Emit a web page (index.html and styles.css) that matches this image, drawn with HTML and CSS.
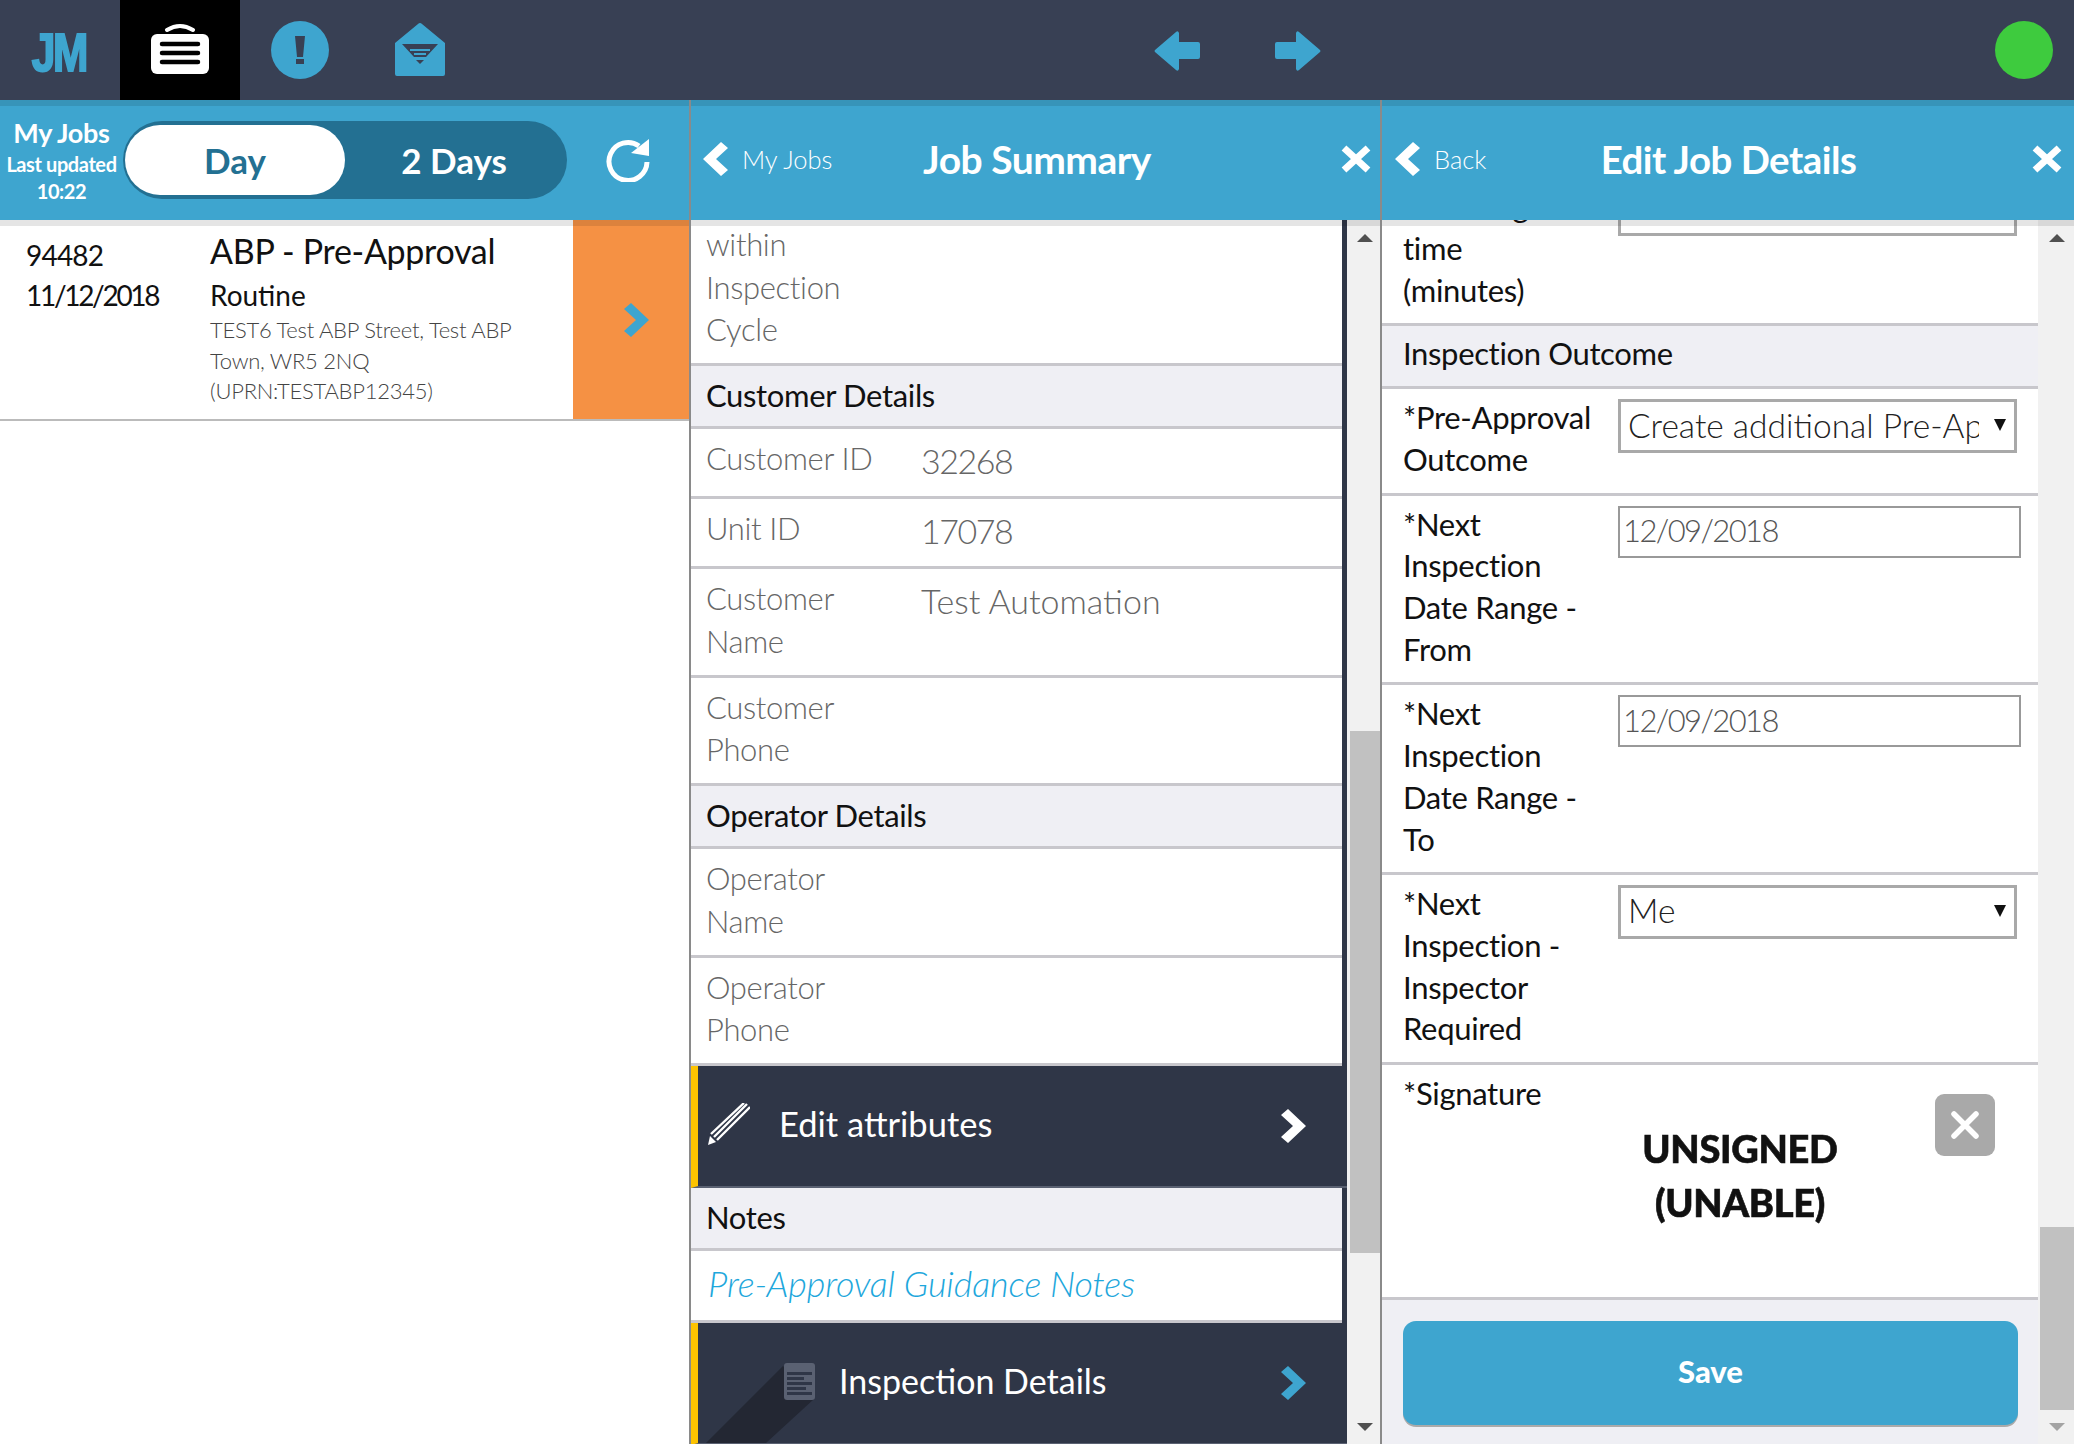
FILE: index.html
```html
<!DOCTYPE html>
<html lang="en">
<head>
    <meta charset="UTF-8">
    <title>My Jobs</title>
    <link rel="stylesheet" href="styles.css">
</head>
<body>

<svg class="defs" width="0" height="0">
    <symbol id="chev" viewBox="0 0 25 34"><path d="M0 6 L7 0 L25 17 L7 34 L0 28 L12 17 Z"/></symbol>
    <symbol id="chev-left" viewBox="0 0 25 34"><path d="M25 6 L18 0 L0 17 L18 34 L25 28 L13 17 Z"/></symbol>
    <symbol id="close" viewBox="0 0 30 28"><path d="M3 3 L27 25 M27 3 L3 25" stroke="#fff" stroke-width="7" fill="none"/></symbol>
</svg>

<header class="topbar">
    <nav class="nav">
        <a class="nav-item"><span class="logo">JM</span></a>
        <a class="nav-item active">
            <svg width="60" height="54" viewBox="0 0 60 54">
                <path d="M17 7 Q30 -1 43 7" stroke="#fff" stroke-width="4" stroke-linecap="round" fill="none"/>
                <rect x="1" y="11" width="58" height="40" rx="6" fill="#fff"/>
                <path d="M12 21 H48 M12 30 H48 M12 39 H48" stroke="#000" stroke-width="4.5" stroke-linecap="round"/>
            </svg>
        </a>
        <a class="nav-item">
            <svg width="58" height="58" viewBox="0 0 58 58">
                <circle cx="29" cy="29" r="29" fill="#3ea5cf"/>
                <path d="M24 15 H34 L32 36 H26 Z M25 38 H33 V43 H25 Z" fill="#384054"/>
            </svg>
        </a>
        <a class="nav-item">
            <svg width="52" height="54" viewBox="0 0 52 54">
                <path d="M24 1 Q26 -1 28 1 L51 20 V51 Q51 53 49 53 H3 Q1 53 1 51 V20 Z" fill="#3ea5cf"/>
                <path d="M8 21 H44 L32 34 H20 Z M22 37 H30 L26 41 Z" fill="#384054"/>
                <path d="M16 27 H36 M20 31 H32" stroke="#3ea5cf" stroke-width="2"/>
            </svg>
        </a>
    </nav>
    <div class="history">
        <svg width="46" height="42" viewBox="0 0 46 42"><path d="M22 2 Q24 0 25 3 V12 H44 Q46 12 46 14 V27 Q46 29 44 29 H25 V39 Q24 42 22 40 L1 22 Q0 21 1 20 Z" fill="#3ea5cf"/></svg>
        <svg width="46" height="42" viewBox="0 0 46 42"><path d="M24 2 Q22 0 21 3 V12 H2 Q0 12 0 14 V27 Q0 29 2 29 H21 V39 Q22 42 24 40 L45 22 Q46 21 45 20 Z" fill="#3ea5cf"/></svg>
    </div>
    <span class="status-dot"></span>
</header>

<main class="panels">

    <section class="panel">
        <div class="panel-head jobs-head">
            <div class="updated">
                <div class="updated-title">My Jobs</div>
                <div>Last updated</div>
                <div>10:22</div>
            </div>
            <div class="toggle">
                <span class="toggle-on">Day</span>
                <span class="toggle-off">2 Days</span>
            </div>
            <svg class="refresh" width="44" height="44" viewBox="0 0 44 44">
                <path d="M33 8 A19 19 0 1 0 41 24" stroke="#fff" stroke-width="5" fill="none"/>
                <path d="M25 15 L43 18 L43 1 Z" fill="#fff"/>
            </svg>
        </div>
        <div class="job">
            <div class="job-ref">
                <div class="job-id">94482</div>
                <div class="job-date">11/12/2018</div>
            </div>
            <div class="job-info">
                <div class="job-title">ABP - Pre-Approval</div>
                <div class="job-type">Routine</div>
                <div class="job-addr">TEST6 Test ABP Street, Test ABP Town, WR5 2NQ (UPRN:TESTABP12345)</div>
            </div>
            <div class="job-go"><svg class="chev blue"><use href="#chev"/></svg></div>
        </div>
    </section>

    <section class="panel">
        <div class="panel-head">
            <a class="back"><svg class="chev"><use href="#chev-left"/></svg>My Jobs</a>
            <h2>Job Summary</h2>
            <svg class="close"><use href="#close"/></svg>
        </div>
        <div class="panel-body">
            <div class="list dark">
                <div class="row first"><div class="label muted">within<br>Inspection<br>Cycle</div></div>
                <div class="section">Customer Details</div>
                <div class="row"><div class="label muted">Customer ID</div><div class="value num">32268</div></div>
                <div class="row"><div class="label muted">Unit ID</div><div class="value num">17078</div></div>
                <div class="row"><div class="label muted">Customer<br>Name</div><div class="value">Test Automation</div></div>
                <div class="row"><div class="label muted">Customer<br>Phone</div></div>
                <div class="section">Operator Details</div>
                <div class="row"><div class="label muted">Operator<br>Name</div></div>
                <div class="row"><div class="label muted">Operator<br>Phone</div></div>
                <div class="action">
                    <svg class="action-icon" width="42" height="42" viewBox="0 0 42 42">
                        <path d="M39 1 L6 34 M42 4 L9 37 M36 0 L3 31" stroke="#fff" stroke-width="2.4" fill="none"/>
                        <path d="M2 33 L8 39 L0 42 Z" fill="#fff"/>
                    </svg>
                    <span class="action-text">Edit attributes</span>
                    <svg class="chev"><use href="#chev"/></svg>
                </div>
                <div class="section">Notes</div>
                <div class="row link-row"><a class="note-link">Pre-Approval Guidance Notes</a></div>
                <div class="action details">
                    <svg class="long-shadow" width="110" height="82" viewBox="0 0 110 82"><path d="M77 5 L108 38 L60 82 L0 82 Z" fill="#232733"/></svg>
                    <svg class="doc-icon" width="31" height="37" viewBox="0 0 31 37">
                        <rect width="31" height="37" rx="3" fill="#5a6172"/>
                        <path d="M3 10.5 H28 M3 15.5 H20 M3 20.5 H28 M3 25.5 H22 M3 30.5 H28" stroke="#2f3647" stroke-width="3"/>
                    </svg>
                    <span class="action-text">Inspection Details</span>
                    <svg class="chev blue"><use href="#chev"/></svg>
                </div>
            </div>
            <div class="scrollbar">
                <span class="arrow-up"></span>
                <span class="thumb thumb-summary"></span>
                <span class="arrow-down"></span>
            </div>
        </div>
    </section>

    <section class="panel last">
        <div class="panel-head">
            <a class="back"><svg class="chev"><use href="#chev-left"/></svg>Back</a>
            <h2>Edit Job Details</h2>
            <svg class="close"><use href="#close"/></svg>
        </div>
        <div class="panel-body">
            <div class="form-wrap">
                <div class="list edit">
                    <div class="row">
                        <div class="label">Travelling<br>time<br>(minutes)</div>
                        <div class="select clipped"></div>
                    </div>
                    <div class="section">Inspection Outcome</div>
                    <div class="row">
                        <div class="label">*Pre-Approval<br>Outcome</div>
                        <div class="select"><span class="select-text">Create additional Pre-Approval</span><span class="select-arrow"></span></div>
                    </div>
                    <div class="row">
                        <div class="label">*Next<br>Inspection<br>Date Range -<br>From</div>
                        <input class="date" type="text" value="12/09/2018">
                    </div>
                    <div class="row">
                        <div class="label">*Next<br>Inspection<br>Date Range -<br>To</div>
                        <input class="date" type="text" value="12/09/2018">
                    </div>
                    <div class="row">
                        <div class="label">*Next<br>Inspection -<br>Inspector<br>Required</div>
                        <div class="select"><span class="select-text">Me</span><span class="select-arrow"></span></div>
                    </div>
                    <div class="row signature">
                        <div class="label">*Signature</div>
                        <div class="sign-box">
                            <div class="unsigned">UNSIGNED<br>(UNABLE)</div>
                            <button class="sign-clear"><svg width="30" height="28" viewBox="0 0 30 28"><path d="M4 3 L26 25 M26 3 L4 25" stroke="#fff" stroke-width="5.5" stroke-linecap="round"/></svg></button>
                        </div>
                    </div>
                </div>
                <div class="form-foot"><button class="save">Save</button></div>
            </div>
            <div class="scrollbar wide">
                <span class="arrow-up"></span>
                <span class="thumb thumb-edit"></span>
                <span class="arrow-down light"></span>
            </div>
        </div>
    </section>

</main>

</body>
</html>
```

FILE: styles.css
```css
* {
    margin: 0;
    padding: 0;
    box-sizing: border-box;
}
body {
    font-family: Lato, "Noto Sans", sans-serif;
    background-color: #fff;
    color: #111;
    width: 2074px;
    height: 1444px;
    overflow: hidden;
}
.defs {
    display: block;
    height: 0;
}
.topbar {
    height: 100px;
    background-color: #384054;
    display: flex;
    align-items: center;
}
.nav {
    display: flex;
    width: 480px;
}
.nav-item {
    width: 120px;
    height: 100px;
    display: flex;
    justify-content: center;
    align-items: center;
}
.nav-item.active {
    background-color: #000;
}
.logo {
    font-family: "Liberation Sans", sans-serif;
    font-size: 53px;
    font-weight: 700;
    letter-spacing: -3px;
    color: #3ea5cf;
    -webkit-text-stroke: 2px #3ea5cf;
    transform: scaleX(0.8);
    margin-left: -2px;
    margin-top: 4px;
}
.history {
    display: flex;
    gap: 75px;
    margin-left: 674px;
    margin-top: 2px;
}
.status-dot {
    width: 58px;
    height: 58px;
    border-radius: 50%;
    background-color: #3ecb3e;
    margin-left: auto;
    margin-right: 21px;
}

.panels {
    display: grid;
    grid-template-columns: 691px 691px 692px;
    height: 1344px;
}
.panel {
    border-right: 2px solid #8a8a8a;
    display: flex;
    flex-direction: column;
    min-width: 0;
    overflow: hidden;
}
.panel.last {
    border-right: none;
}
.panel-head {
    height: 120px;
    flex-shrink: 0;
    background-color: #3ea5cf;
    color: #fff;
    display: grid;
    grid-template-columns: 1fr auto 1fr;
    align-items: center;
    padding: 0 9px 2px 12px;
    position: relative;
    z-index: 2;
    box-shadow: 0 6px 0 rgba(0, 0, 0, 0.1), inset 0 6px 0 rgba(0, 0, 0, 0.1);
}
.last .panel-head {
    padding: 0 12px 2px 13px;
}
.panel-head h2 {
    font-size: 39px;
    font-weight: 700;
    letter-spacing: -0.5px;
}
.last .panel-head h2 {
    font-size: 38.4px;
}
.back {
    display: flex;
    align-items: center;
    gap: 14px;
    font-size: 25.5px;
    font-weight: 300;
}
.close {
    width: 30px;
    height: 28px;
    justify-self: end;
}
.chev {
    width: 25px;
    height: 34px;
    fill: #fff;
    flex-shrink: 0;
}
.chev.blue {
    fill: #3ea5cf;
}

.jobs-head {
    display: flex;
    padding: 0;
}
.updated {
    width: 123px;
    text-align: center;
    font-size: 20px;
    font-weight: 700;
    line-height: 27px;
    letter-spacing: -0.4px;
}
.updated-title {
    font-size: 27px;
    line-height: 36px;
    letter-spacing: -0.3px;
}
.toggle {
    width: 444px;
    height: 78px;
    border-radius: 39px;
    background-color: #237092;
    display: flex;
    align-items: center;
    padding: 0 4px 0 2px;
    font-size: 35px;
    font-weight: 700;
}
.toggle-on {
    width: 220px;
    height: 70px;
    line-height: 70px;
    border-radius: 35px;
    background-color: #fff;
    color: #237092;
    text-align: center;
}
.toggle-off {
    flex: 1;
    text-align: center;
}
.refresh {
    margin-left: 39px;
}

.job {
    display: flex;
    height: 201px;
    border-bottom: 2px solid #bbb;
}
.job-ref {
    width: 210px;
    padding: 15px 0 0 26px;
    font-size: 28px;
    line-height: 40px;
}
.job-id {
    letter-spacing: -0.8px;
}
.job-date {
    letter-spacing: -2.3px;
}
.job-info {
    width: 363px;
    padding-top: 11px;
}
.job-title {
    font-size: 34px;
    line-height: 40px;
    letter-spacing: -0.3px;
}
.job-type {
    font-size: 28px;
    line-height: 44px;
    margin-top: 2px;
    margin-bottom: -2px;
}
.job-addr {
    font-size: 22px;
    font-weight: 300;
    line-height: 30.5px;
    letter-spacing: -0.25px;
    color: #444;
    padding-right: 30px;
}
.job-go {
    width: 116px;
    background-color: #f59144;
    display: flex;
    justify-content: center;
    align-items: center;
    padding-left: 10px;
}

.panel-body {
    flex: 1;
    display: flex;
    min-height: 0;
}
.list {
    flex: 1;
    min-width: 0;
    overflow: hidden;
}
.list.dark {
    background-color: #2f3647;
}
.row {
    background-color: #fff;
    border-bottom: 3px solid #c8c7cc;
    padding: 8px 0 12px 15px;
    display: grid;
    grid-template-columns: 215px 1fr;
    font-size: 31px;
    line-height: 42.6px;
    letter-spacing: -0.15px;
    margin-right: 5px;
}
.row.first {
    margin-top: -5px;
}
.muted {
    font-weight: 300;
    color: #666;
    letter-spacing: -0.35px;
}
.value {
    font-size: 34px;
    font-weight: 300;
    line-height: 47px;
    letter-spacing: 0;
    color: #666;
}
.value.num {
    letter-spacing: -1.5px;
}
.section {
    background-color: #efeff4;
    border-bottom: 3px solid #c8c7cc;
    padding: 9px 0 10px 15px;
    font-size: 31px;
    line-height: 41.6px;
    letter-spacing: -0.35px;
    margin-right: 5px;
}
.link-row {
    display: block;
    padding: 10px 0 13px 17px;
    line-height: 44px;
}
.note-link {
    font-size: 36px;
    font-weight: 300;
    font-style: italic;
    color: #1ea7dc;
}

.action {
    height: 122px;
    background-color: #2f3647;
    border-left: 7px solid #fdc300;
    border-bottom: 2px solid #5a6172;
    color: #fff;
    display: flex;
    align-items: center;
    padding: 0 41px 0 10px;
    position: relative;
    overflow: hidden;
}
.action-text {
    flex: 1;
    font-size: 34.5px;
    margin: -4px 0 0 29px;
}
.action-icon {
    margin-top: -4px;
}
.details {
    padding-left: 86px;
}
.details .action-text {
    font-size: 34px;
    margin: -6px 0 0 24px;
}
.doc-icon {
    position: relative;
    margin-top: -4px;
}
.long-shadow {
    position: absolute;
    left: 8px;
    bottom: 0;
}

.scrollbar {
    width: 33px;
    background-color: #f1f1f1;
    display: flex;
    flex-direction: column;
    align-items: center;
    padding: 14px 0 13px 2px;
    flex-shrink: 0;
}
.scrollbar.wide {
    width: 36px;
    padding-left: 1px;
}
.arrow-up, .arrow-down {
    width: 0;
    height: 0;
    border-left: 8px solid transparent;
    border-right: 8px solid transparent;
}
.arrow-up {
    border-bottom: 8px solid #505050;
}
.arrow-down {
    border-top: 8px solid #505050;
    margin-top: auto;
}
.arrow-down.light {
    border-top-color: #a3a3a3;
}
.thumb {
    background-color: #c1c1c1;
    width: 100%;
    margin-left: 1px;
}
.thumb-summary {
    height: 522px;
    margin-top: 489px;
}
.thumb-edit {
    height: 183px;
    margin-top: 985px;
}

.form-wrap {
    flex: 1;
    min-width: 0;
    overflow: hidden;
    display: flex;
    flex-direction: column;
    background-color: #efeff4;
}
.list.edit {
    flex: none;
    overflow: visible;
    margin-top: -42px;
}
.edit .row, .edit .section {
    margin-right: 0;
    padding-left: 21px;
}
.edit .row {
    grid-template-columns: 215px 1fr;
    line-height: 41.8px;
    letter-spacing: -0.3px;
    padding-bottom: 11.5px;
}
.edit .section {
    padding-top: 7px;
    padding-bottom: 12px;
}
.select {
    width: 399px;
    height: 54px;
    margin-top: 2px;
    border: 3px solid #a9a9a9;
    background-color: #fff;
    display: flex;
    align-items: center;
    padding: 0 8px 2px 7px;
    font-size: 33.5px;
    font-weight: 300;
    letter-spacing: 0;
    color: #222;
    justify-content: space-between;
}
.select.clipped {
    margin-top: -4px;
}
.select-text {
    width: 351px;
    overflow: hidden;
    white-space: nowrap;
}
.select-arrow {
    width: 0;
    height: 0;
    border-left: 6px solid transparent;
    border-right: 6px solid transparent;
    border-top: 12px solid #111;
}
.date {
    width: 403px;
    height: 52px;
    margin-top: 2px;
    border: 2px solid #999;
    padding: 0 3px 3px;
    font-family: inherit;
    font-size: 31px;
    font-weight: 300;
    letter-spacing: -1.6px;
    color: #555;
}
.signature {
    height: 235px;
    display: block;
}
.sign-box {
    display: flex;
    justify-content: flex-end;
    align-items: flex-start;
    position: relative;
    padding-right: 43px;
}
.unsigned {
    position: absolute;
    left: 237px;
    top: 7px;
    width: 200px;
    text-align: center;
    font-size: 38px;
    font-weight: 900;
    line-height: 54px;
    -webkit-text-stroke: 0.6px #111;
    filter: blur(0.6px);
}
.sign-clear {
    width: 60px;
    height: 62px;
    border: none;
    border-radius: 9px;
    background-color: #a9a9a9;
    margin-top: -20px;
    display: flex;
    justify-content: center;
    align-items: center;
}
.form-foot {
    flex: 1;
    padding: 21px 20px 0 21px;
}
.save {
    width: 100%;
    height: 104px;
    border: none;
    border-radius: 13px;
    background-color: #3ea5cf;
    box-shadow: 0 2px 0 #aaa;
    color: #fff;
    font-family: inherit;
    font-size: 31px;
    font-weight: 900;
    padding-bottom: 4px;
}
```
